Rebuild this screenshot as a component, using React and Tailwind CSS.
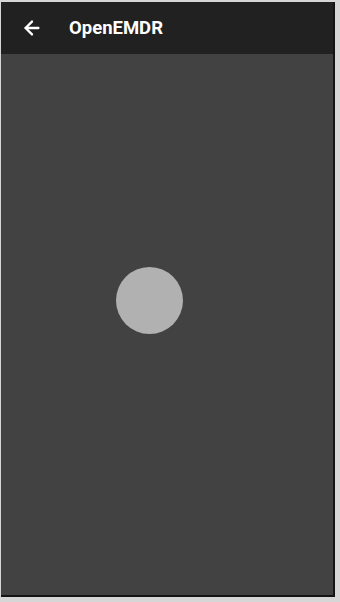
import { ArrowLeft } from "lucide-react"

function App() {
    return (
        <div className="w-[340px] h-[602px] flex flex-col bg-[#d6d6d6] pt-[2px] pl-px pr-[5px] pb-[5px]" style={{ fontFamily: "Roboto, 'Noto Sans', sans-serif" }}>
            <div className="flex-1 flex flex-col border-r-2 border-b-2 border-[#141414]">
                {/* Toolbar */}
                <div className="h-[52px] bg-[#212121] flex items-center">
                    <ArrowLeft className="ml-[20px] text-white" size={22} strokeWidth={2.5} />
                    <h1 className="ml-[26px] text-white text-[18.5px] font-bold leading-none">OpenEMDR</h1>
                </div>
                {/* Ball area */}
                <div className="flex-1 bg-[#424242]">
                    <div className="ml-[115px] mt-[213px] w-[67px] h-[67px] rounded-full bg-[#b1b1b1]"></div>
                </div>
            </div>
        </div>
    )
}

export default App
